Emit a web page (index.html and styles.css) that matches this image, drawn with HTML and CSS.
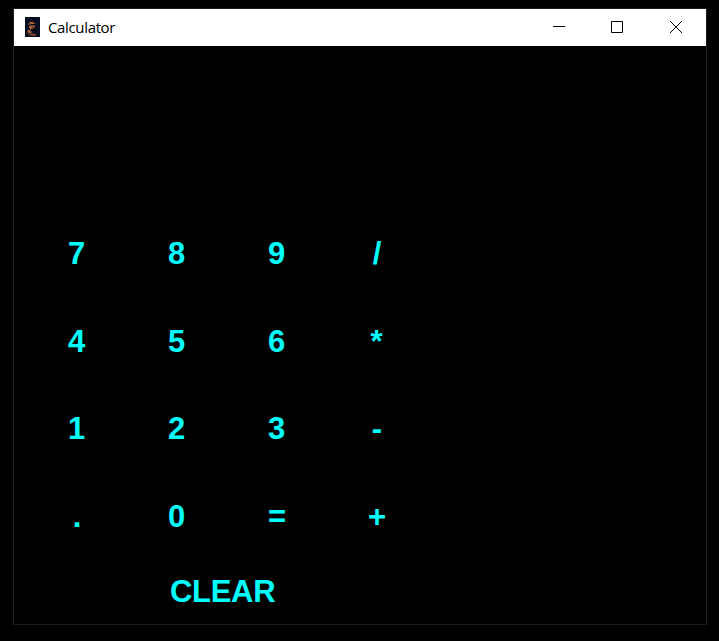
FILE: index.html
```html
<!DOCTYPE html>
<html lang="en">
<head>
<meta charset="utf-8">
<title>Calculator</title>
<link rel="stylesheet" href="styles.css">
</head>
<body>
<main class="window">
  <header class="titlebar">
    <svg class="app-icon" viewBox="0 0 15 20" shape-rendering="crispEdges">
      <rect width="15" height="20" fill="#080d20"/>
      <path fill="#5c3426" d="M4 5h5v1h2v2H9v1H5V8H3V6h1zM2 13h3v1h2v2h1v1h3v2H5v-1H3v-2H2z"/>
      <path fill="#a76340" d="M5 5h3v1h1v1H5zM4 9h3v1h2v1H6v2H5v-2H4zM3 13h2v1h1v2H4v-1H3zM8 17h2v1H8z"/>
      <path fill="#78462f" d="M7 8h3v3H8v1H6v-1h1z"/>
      <path fill="#02040b" d="M6 7h5v1H6zM8 12h3v3H9v-1H8z"/>
    </svg>
    <h1 class="title">Calculator</h1>
    <div class="controls">
      <svg viewBox="0 0 12 12"><path d="M0 5.5h12"/></svg>
      <svg viewBox="0 0 12 12"><path d="M.5.5h11v11H.5z"/></svg>
      <svg class="close" viewBox="0 0 12 12"><path d="M0 0l12 12M12 0L0 12"/></svg>
    </div>
  </header>
  <div class="keys">
    <button>7</button><button>8</button><button>9</button><button class="symbol">/</button>
    <button>4</button><button>5</button><button>6</button><button>*</button>
    <button>1</button><button>2</button><button>3</button><button class="symbol">-</button>
    <button class="symbol">.</button><button>0</button><button class="symbol">=</button><button class="symbol">+</button>
  </div>
  <button class="clear">CLEAR</button>
</main>
</body>
</html>
```
FILE: styles.css
```css
* { box-sizing: border-box; }
body { margin: 0; padding: 8px 12px 0 13px; background: #000; }
.window { height: 617px; border: 1px solid #1b1b1b; }
.titlebar { display: flex; align-items: center; height: 37px; padding: 0 24px 1px 11px; background: #fff; }
.app-icon { width: 15px; height: 20px; }
.title { margin: 0 0 0 8px; font: 400 15px "Open Sans", sans-serif; letter-spacing: -.35px; color: #000; }
.controls { display: flex; gap: 46px; margin-left: auto; }
.controls svg { width: 12px; height: 12px; fill: none; stroke: #000; }
.controls .close { margin-left: 1px; }
button { padding: 0; border: 0; background: none; color: #0ff; font: 700 31px/34px "Liberation Sans", Arial, sans-serif; }
.keys { display: grid; grid-template-columns: repeat(4, 100px); grid-template-rows: 88px 87px 88px 34px; align-items: start; margin: 191px 0 0 12px; }
.keys button { padding-left: 1px; }
.keys .symbol { padding-left: 2px; }
.clear { display: block; margin: 41px 0 0 156px; letter-spacing: -.3px; }
```
